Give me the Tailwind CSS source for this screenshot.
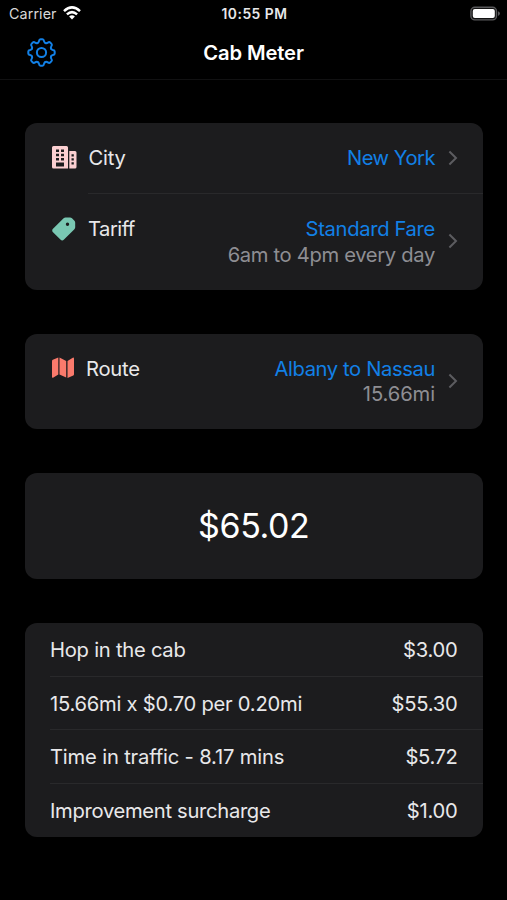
<!DOCTYPE html>
<html lang="en">
<head>
<meta charset="utf-8">
<title>Cab Meter</title>
<script src="https://cdn.jsdelivr.net/npm/@tailwindcss/browser@4"></script>
</head>
<body class="bg-black">
<div class="w-[507px] h-[900px] overflow-hidden bg-black text-[#e8e8ea] font-['Inter','Liberation_Sans',sans-serif] text-[20.2px] leading-[25px] tracking-[-0.25px]">
  <header class="h-[80px] border-b border-[#111112] flex flex-col">
    <div class="h-[28px] grid grid-cols-3 items-center pl-[9px] pr-[7px] text-[14.3px] leading-[18px]">
      <div class="flex items-center gap-[6px] tracking-[0.1px] text-[#d8d8d8]">
        <span>Carrier</span>
        <svg class="w-[18px] h-[14px] -mt-[2px]" viewBox="0 0 18 14" fill="none" stroke="#fff" stroke-width="2.5"><path d="M1 5.1Q9-2.3 17 5.1"/><path d="M3.9 8.4Q9 3.9 14.1 8.4"/><path d="M9 13.4 6.1 10.5Q9 8.1 11.9 10.5Z" fill="#fff" stroke="none"/></svg>
      </div>
      <div class="text-center font-semibold text-[13.8px] tracking-[0.55px] whitespace-nowrap">10:55 PM</div>
      <svg class="w-[30px] h-[15px] justify-self-end -mt-[1px]" viewBox="0 0 30 15"><rect x=".9" y="1.3" width="25.6" height="12.6" rx="3.9" fill="#111" stroke="#58585a" stroke-width="1.4"/><rect x="2.8" y="3.1" width="22" height="9" rx="2" fill="#fff"/><path d="M28 5.3q2 .8 2 2.3t-2 2.3z" fill="#58585a"/></svg>
    </div>
    <div class="h-[48px] grid grid-cols-[1fr_auto_1fr] items-center px-[27px]">
      <svg class="w-[29px] h-[29px]" viewBox="-14.5 -14.5 29 29" fill="none" stroke="#1280e6" stroke-width="2" stroke-linecap="round">
        <defs><path id="tooth" d="M-3.94-9.52C-3.02-9.9-2.7-10.4-2.5-11.4Q-2.2-13.2-1-13.2H1Q2.2-13.2 2.5-11.4C2.7-10.4 3.02-9.9 3.94-9.52"/></defs>
        <use href="#tooth"/><use href="#tooth" transform="rotate(45)"/><use href="#tooth" transform="rotate(90)"/><use href="#tooth" transform="rotate(135)"/><use href="#tooth" transform="rotate(180)"/><use href="#tooth" transform="rotate(225)"/><use href="#tooth" transform="rotate(270)"/><use href="#tooth" transform="rotate(315)"/>
        <circle r="4.6"/>
      </svg>
      <h1 class="font-semibold text-white text-[20.2px] tracking-[-0.1px]">Cab Meter</h1>
    </div>
  </header>

  <main class="px-[25px] pt-[42.5px] flex flex-col gap-[43.5px]">
    <section class="rounded-[12px] bg-[#1c1c1e] h-[167.5px] w-[457.5px]">
      <div class="h-[70px] flex items-center pl-[27px] pr-[25px]">
        <svg class="w-[25px] h-[23px] mr-[11.5px]" viewBox="0 0 25 23"><path fill="#fbcfd1" fill-rule="evenodd" d="M1.5 0H14.5Q16 0 16 1.5V22.5H1.5Q0 22.5 0 21V1.5Q0 0 1.5 0ZM4 3.5V6H7V3.5ZM9 3.5V6H12V3.5ZM4 7.7V10.2H7V7.7ZM9 7.7V10.2H12V7.7ZM4 11.9V14.4H7V11.9ZM9 11.9V14.4H12V11.9ZM4 16.6V20.4H12V16.6ZM17.3 5H23Q24.5 5 24.5 6.5V21Q24.5 22.5 23 22.5H17.3ZM19.5 8.2V10.4H21.8V8.2ZM19.5 12.2V14.4H21.8V12.2ZM19.5 16.2V18.4H21.8V16.2Z"/></svg>
        <span>City</span>
        <span class="ml-auto text-[#1280e6] tracking-[-0.5px]">New York</span>
        <svg class="w-[10px] h-[16px] ml-[12.5px]" viewBox="0 0 10 16" fill="none" stroke="#5c5c60" stroke-width="2"><path d="M1.4 1.5 8 8 1.4 14.5"/></svg>
      </div>
      <div class="ml-[63px] h-px bg-[#29292b]"></div>
      <div class="h-[96.5px] flex pl-[27px] pr-[25px] pt-[22.5px]">
        <svg class="w-[24px] h-[24px] mr-[12px] mt-[1px]" viewBox="0 0 24 24"><path fill="#79c7b2" fill-rule="evenodd" d="M13.5.5H18Q19.2.5 20 1.3L22.2 3.5Q23.2 4.5 23.2 5.8V10.3Q23.2 11.4 22.4 12.2L12 22.6Q10.2 24.3 8.4 22.6L1 15.2Q-.6 13.4 1 11.7L11.6 1.3Q12.4.5 13.5.5ZM15.5 5.6A1.7 1.7 0 1 0 15.5 9A1.7 1.7 0 1 0 15.5 5.6Z"/></svg>
        <span class="tracking-[-0.5px]">Tariff</span>
        <div class="ml-auto text-right leading-[25.5px] tracking-[-0.33px]"><div class="text-[#1280e6]">Standard Fare</div><div class="text-[#8e8e93]">6am to 4pm every day</div></div>
        <svg class="w-[10px] h-[16px] ml-[12.5px] mt-[17px]" viewBox="0 0 10 16" fill="none" stroke="#5c5c60" stroke-width="2"><path d="M1.4 1.5 8 8 1.4 14.5"/></svg>
      </div>
    </section>

    <section class="rounded-[12px] bg-[#1c1c1e] h-[95.5px] w-[457.5px] flex pl-[27px] pr-[25px] pt-[22.7px]">
      <svg class="w-[22px] h-[22px] mr-[12px] mt-[1px]" viewBox="0 0 22 22" fill="#fa7a6c"><path d="M0 4.2Q0 3.3.8 2.8L6.3.6V17.6L1 20.7Q0 21.1 0 20Z"/><path d="M7.5.6 14.2 4V20.6L7.5 17.6Z"/><path d="M15.5 4 20.8.7Q22 .2 22 1.5V17.2Q22 18 21.3 18.4L15.5 20.9Z"/></svg>
      <span>Route</span>
      <div class="ml-auto text-right"><div class="text-[#1280e6] tracking-[-0.38px]">Albany to Nassau</div><div class="text-[#8e8e93] tracking-[-0.1px]">15.66mi</div></div>
      <svg class="w-[10px] h-[16px] ml-[12.5px] mt-[17px]" viewBox="0 0 10 16" fill="none" stroke="#5c5c60" stroke-width="2"><path d="M1.4 1.5 8 8 1.4 14.5"/></svg>
    </section>

    <section class="rounded-[12px] bg-[#1c1c1e] h-[106.5px] w-[457.5px] flex items-center justify-center text-[34px] tracking-[-0.4px] text-white">$65.02</section>

    <section class="rounded-[12px] bg-[#1c1c1e] h-[214.5px] w-[457.5px] pl-[25px] pt-[1px] grid grid-rows-4">
      <div class="flex items-center justify-between pr-[25px] border-b border-[#29292b]"><span>Hop in the cab</span><span>$3.00</span></div>
      <div class="flex items-center justify-between pr-[25px] border-b border-[#29292b]"><span>15.66mi x $0.70 per 0.20mi</span><span>$55.30</span></div>
      <div class="flex items-center justify-between pr-[25px] border-b border-[#29292b]"><span class="tracking-[-0.17px]">Time in traffic - 8.17 mins</span><span class="tracking-[-0.4px]">$5.72</span></div>
      <div class="flex items-center justify-between pr-[25px]"><span class="tracking-[-0.31px]">Improvement surcharge</span><span>$1.00</span></div>
    </section>
  </main>
</div>
</body>
</html>
